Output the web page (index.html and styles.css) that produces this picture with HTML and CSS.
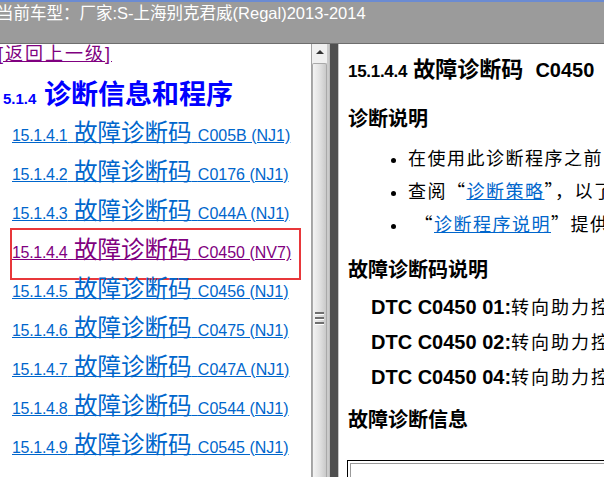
FILE: index.html
```html
<!DOCTYPE html>
<html lang="zh-CN">
<head>
    <meta charset="UTF-8">
    <title>故障诊断码 C0450</title>
    <link rel="stylesheet" href="styles.css">
</head>
<body>
    <div class="topbar">
        <div class="car-title">当前车型：厂家:S-上海别克君威(Regal)2013-2014</div>
    </div>

    <div class="frames">
        <!-- 左侧目录 -->
        <div class="toc-frame">
            <a class="back" href="#">[返回上一级]</a>
            <h2 class="toc-title"><span class="num">5.1.4</span> 诊断信息和程序</h2>
            <ul class="toc">
                <li><a href="#"><span class="num">15.1.4.1</span> <span class="cn">故障诊断码</span> <span class="code">C005B (NJ1)</span></a></li>
                <li><a href="#"><span class="num">15.1.4.2</span> <span class="cn">故障诊断码</span> <span class="code">C0176 (NJ1)</span></a></li>
                <li><a href="#"><span class="num">15.1.4.3</span> <span class="cn">故障诊断码</span> <span class="code">C044A (NJ1)</span></a></li>
                <li class="current"><a class="visited" href="#"><span class="num">15.1.4.4</span> <span class="cn">故障诊断码</span> <span class="code">C0450 (NV7)</span></a></li>
                <li><a href="#"><span class="num">15.1.4.5</span> <span class="cn">故障诊断码</span> <span class="code">C0456 (NJ1)</span></a></li>
                <li><a href="#"><span class="num">15.1.4.6</span> <span class="cn">故障诊断码</span> <span class="code">C0475 (NJ1)</span></a></li>
                <li><a href="#"><span class="num">15.1.4.7</span> <span class="cn">故障诊断码</span> <span class="code">C047A (NJ1)</span></a></li>
                <li><a href="#"><span class="num">15.1.4.8</span> <span class="cn">故障诊断码</span> <span class="code">C0544 (NJ1)</span></a></li>
                <li><a href="#"><span class="num">15.1.4.9</span> <span class="cn">故障诊断码</span> <span class="code">C0545 (NJ1)</span></a></li>
            </ul>
        </div>

        <div class="scrollbar">
            <div class="arrow-up"></div>
            <div class="thumb">
                <div class="grip"><i></i><i></i><i></i></div>
            </div>
        </div>

        <div class="divider"></div>

        <!-- 右侧正文 -->
        <div class="doc-frame">
            <h1 class="doc-title"><span class="num">15.1.4.4</span> <span class="cn">故障诊断码</span>&nbsp;&nbsp;<span class="code">C0450</span></h1>

            <h3>诊断说明</h3>
            <ul class="notes">
                <li>在使用此诊断程序之前，请执行<span class="q">“</span>诊断系统检查－车辆<span class="q">”</span>。</li>
                <li>查阅<span class="q">“</span><a href="#">诊断策略</a><span class="q">”</span>，以了解诊断方法。</li>
                <li>&nbsp;<span class="q">“</span><a href="#">诊断程序说明</a><span class="q">”</span>提供每种诊断类别的概述。</li>
            </ul>

            <h3>故障诊断码说明</h3>
            <div class="dtc"><b>DTC C0450 01:</b>转向助力控制电路对搭铁短路</div>
            <div class="dtc"><b>DTC C0450 02:</b>转向助力控制电路对蓄电池短路</div>
            <div class="dtc"><b>DTC C0450 04:</b>转向助力控制电路开路</div>

            <h3>故障诊断信息</h3>
            <div class="info-box">
                <div class="info-inner"></div>
            </div>
        </div>
    </div>
</body>
</html>
```

FILE: styles.css
```css
* {
    margin: 0;
    padding: 0;
    box-sizing: border-box;
}
html, body {
    height: 100%;
    overflow: hidden;
}
body {
    font-family: "Liberation Sans", "Noto Sans CJK SC", sans-serif;
    background: #fff;
    display: flex;
    flex-direction: column;
}

/* 顶部车型栏 */
.topbar {
    height: 44px;
    background: #9b9b9b;
    border-top: 2px solid #6b8bd2;
    border-bottom: 1px solid #6e6e6e;
    flex-shrink: 0;
    overflow: hidden;
}
.car-title {
    color: #fff;
    font-size: 16.5px;
    line-height: 20px;
    margin: 1px 0 0 -3px;
    white-space: nowrap;
}

.frames {
    flex: 1;
    display: flex;
    min-height: 0;
}

/* 左侧目录 */
.toc-frame {
    width: 311px;
    flex-shrink: 0;
    overflow: hidden;
    white-space: nowrap;
}
.back {
    display: inline-block;
    margin-left: -2px;
    font-size: 18px;
    line-height: 20px;
    letter-spacing: 2px;
    color: #800080;
}
.toc-title {
    margin: 14px 0 0 3px;
    color: #0000ff;
    font-size: 27px;
    line-height: 34px;
    font-weight: bold;
}
.toc-title .num {
    font-size: 15px;
    letter-spacing: 0;
}
.toc {
    list-style: none;
    margin-top: -2px;
}
.toc li {
    position: relative;
    height: 39px;
    line-height: 39px;
    padding-left: 12px;
}
.toc a {
    color: #0066cc;
    word-spacing: 2px;
}
.toc a.visited {
    color: #800080;
}
.num {
    font-size: 16px;
    letter-spacing: -0.3px;
}
.toc .cn {
    font-size: 23.5px;
    word-spacing: 0;
}
.toc .code {
    font-size: 16px;
    word-spacing: 0;
}
.toc li.current::after {
    content: "";
    position: absolute;
    left: 10px;
    top: -3px;
    width: 287px;
    height: 48px;
    border: 2px solid #e8373a;
}

/* 滚动条 */
.scrollbar {
    width: 18px;
    flex-shrink: 0;
    display: flex;
    flex-direction: column;
    background: #f0f0f0;
    border-left: 1px solid #a3a3a3;
    border-right: 2px solid #cbcbcb;
}
.arrow-up {
    height: 19px;
    position: relative;
}
.arrow-up::after {
    content: "";
    position: absolute;
    left: 4px;
    top: 6px;
    border-left: 4px solid transparent;
    border-right: 4px solid transparent;
    border-bottom: 4px solid #333;
}
.thumb {
    flex: 1;
    background: linear-gradient(to right, #f3f3f3, #e2e2e2 50%, #c9c9c9);
    border: 1px solid #a9a9a9;
    border-bottom: none;
    border-radius: 2px 2px 0 0;
    padding-top: 248px;
}
.grip {
    width: 9px;
    margin-left: 2px;
}
.grip i {
    display: block;
    height: 3px;
    margin-bottom: 2px;
    background: #6f6f6f;
    border-bottom: 1px solid #fff;
}

.divider {
    width: 10px;
    flex-shrink: 0;
    background: #4f4f4f;
    border-left: 1px solid #bdbdbd;
    border-right: 1px solid #c6c6c6;
}

/* 右侧正文 */
.doc-frame {
    flex: 1;
    min-width: 0;
    overflow: hidden;
    white-space: nowrap;
    padding: 12px 0 0 9px;
    color: #000;
}
.doc-title {
    font-size: 22px;
    line-height: 28px;
    font-weight: bold;
}
.doc-title .num {
    font-size: 17px;
}
.doc-title .code {
    font-size: 20px;
}
.doc-frame h3 {
    font-size: 20px;
    line-height: 28px;
    font-weight: bold;
    margin-top: 19px;
}
.notes {
    margin-top: 10px;
    padding-left: 60px;
    font-size: 18px;
    line-height: 33px;
    letter-spacing: 1.5px;
}
.notes li {
    height: 33px;
}
.notes a {
    color: #0066cc;
}
.q {
    font-family: "Noto Sans CJK SC", sans-serif;
    font-feature-settings: "fwid";
    line-height: 1;
}
.notes + h3 {
    margin-top: 14px;
}
.doc-frame h3 + .dtc {
    margin-top: 6px;
}
.dtc {
    padding-left: 23px;
    font-size: 18px;
    line-height: 34px;
    letter-spacing: 2px;
}
.dtc b {
    font-size: 20px;
    letter-spacing: 0;
}
.doc-frame .dtc + h3 {
    margin-top: 11px;
}
.info-box {
    margin: 26px 0 0 -1px;
    width: 300px;
    border: 1px solid #000;
    padding: 2px;
}
.info-inner {
    height: 80px;
    border: 1px solid #9a9a9a;
}
```
